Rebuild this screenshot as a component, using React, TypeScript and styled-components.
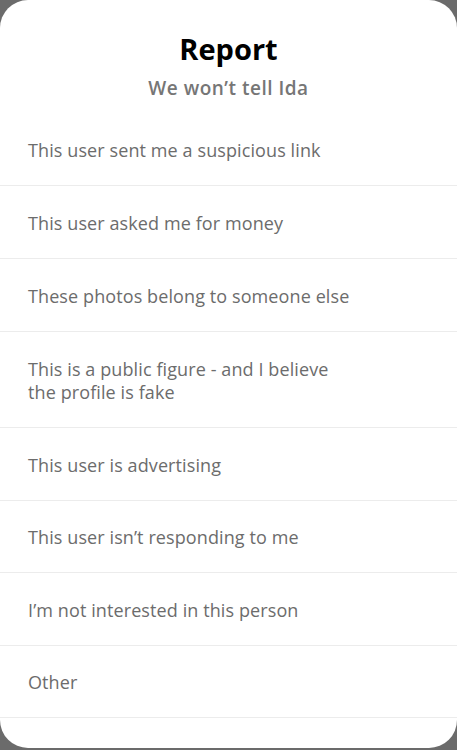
import React from "react";
import styled, { createGlobalStyle } from "styled-components";

const Global = createGlobalStyle`
  html, body { margin: 0; padding: 0; background: #6b6b6b; }
  body { font-family: "Open Sans", "Liberation Sans", sans-serif; -webkit-font-smoothing: antialiased; }
`;

const Sheet = styled.div`
  width: 457px;
  height: 748px;
  background: #ffffff;
  border-radius: 28px;
  overflow: hidden;
  display: flex;
  flex-direction: column;
`;

const Header = styled.header`
  display: flex;
  flex-direction: column;
  align-items: center;
  padding-top: 30px;
  height: 83px;
  box-sizing: content-box;
`;

const Title = styled.h1`
  margin: 0;
  font-size: 29px;
  line-height: 38px;
  font-weight: 700;
  color: #000;
`;

const Subtitle = styled.h2`
  margin: 8px 0 0;
  font-size: 19px;
  line-height: 24px;
  font-weight: 600;
  letter-spacing: 0.5px;
  color: #767676;
`;

const List = styled.ul`
  list-style: none;
  margin: 0;
  padding: 0;
`;

const Row = styled.li<{ $tall?: boolean; $short?: boolean }>`
  height: ${(p) => (p.$tall ? 95 : p.$short ? 71 : 72)}px;
  border-bottom: 1px solid #ececec;
  display: flex;
  align-items: center;
  padding: 0 28px;
  font-size: 18px;
  line-height: 23px;
  letter-spacing: 0.1px;
  color: #6c6c6c;
  cursor: pointer;
`;

const Label = styled.span<{ $wrap?: boolean }>`
  max-width: ${(p) => (p.$wrap ? "320px" : "none")};
  padding-top: 2px;
`;

const items: { text: string; tall?: boolean; short?: boolean }[] = [
  { text: "This user sent me a suspicious link" },
  { text: "This user asked me for money" },
  { text: "These photos belong to someone else" },
  { text: "This is a public figure - and I believe the profile is fake", tall: true },
  { text: "This user is advertising" },
  { text: "This user isn\u2019t responding to me", short: true },
  { text: "I\u2019m not interested in this person" },
  { text: "Other", short: true },
];

export default function App() {
  return (
    <>
      <Global />
      <Sheet>
        <Header>
          <Title>Report</Title>
          <Subtitle>We won’t tell Ida</Subtitle>
        </Header>
        <List>
          {items.map((it) => (
            <Row key={it.text} $tall={it.tall} $short={it.short}>
              <Label $wrap={it.tall}>{it.text}</Label>
            </Row>
          ))}
        </List>
      </Sheet>
    </>
  );
}
